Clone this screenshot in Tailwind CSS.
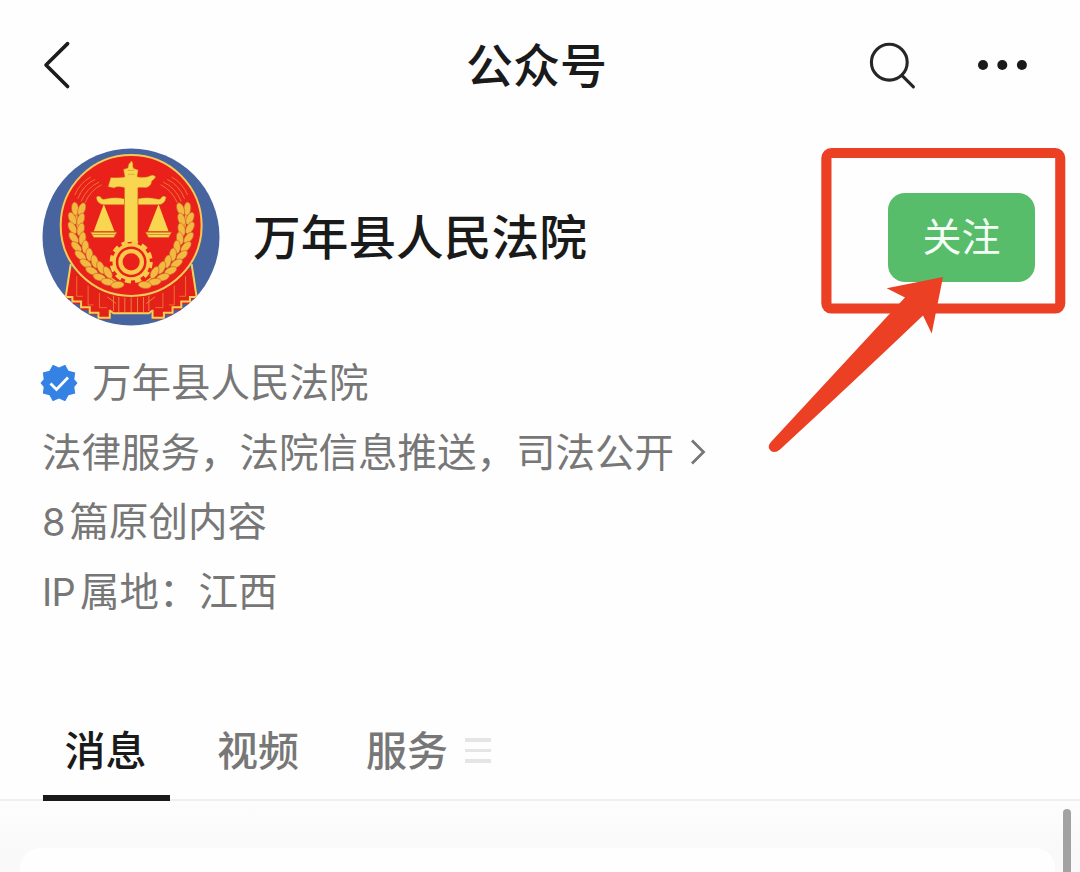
<!DOCTYPE html>
<html lang="zh-CN">
<head>
<meta charset="utf-8">
<title>公众号</title>
<script src="https://cdn.jsdelivr.net/npm/@tailwindcss/browser@4"></script>
</head>
<body class="bg-[#fefefe]">
<div class="relative flex h-[872px] w-[1080px] flex-col overflow-hidden bg-[#fefefe] font-['Noto_Sans_CJK_SC',sans-serif] text-[#1a1a1a]">

  <header class="grid h-[132px] shrink-0 grid-cols-3 items-center pr-[53px] pl-[43px]">
    <svg class="h-[50px] w-[30px]" viewBox="0 0 30 50" fill="none" stroke="#1c1c1c" stroke-width="3.6" stroke-linecap="round" stroke-linejoin="round"><path d="M24.6 2.6 3 24l21.6 21.5"/></svg>
    <h1 class="pb-[6px] pl-[3px] text-center text-[47px] leading-[66px] font-medium">公众号</h1>
    <div class="flex items-center justify-end gap-[61px]">
      <svg class="h-[50px] w-[48px]" viewBox="0 0 48 50" fill="none" stroke="#262626" stroke-width="3.1" stroke-linecap="round"><circle cx="21.3" cy="21.2" r="17.9"/><path d="m34.4 34.8 11 11"/></svg>
      <svg class="-mr-px h-[12px] w-[51px]" viewBox="0 0 51 12" fill="#1a1a1a"><circle cx="6" cy="5" r="5"/><circle cx="25.3" cy="5" r="5"/><circle cx="44.9" cy="5" r="5"/></svg>
    </div>
  </header>

  <section class="flex h-[210px] shrink-0 items-center pr-[45px] pl-[42px]">
    <svg class="h-[178px] w-[178px] shrink-0" viewBox="36 24 533 533">
      <defs>
        <clipPath id="disc"><circle cx="302.5" cy="290.5" r="265"/></clipPath>
        <g id="grain"><ellipse rx="10.5" ry="20" fill="#f3b941" stroke="#cf6030" stroke-width="1.8"/></g>
        <g id="half">
          <path d="M122 385 108 478h20v14h26v18h26v13h26v14h34v-52h68V400z" fill="#e32119"/>
          <path d="M122 372 107 470h20v14h26v17h26v16h26v15h34v-24" fill="none" stroke="#f6cf58" stroke-width="6"/>
          <path d="M140 408v60h18M174 436v58h16M208 458v44h22" fill="none" stroke="#f0973a" stroke-width="2"/>
        </g>
        <g id="side">
          <path d="M134 165q16-38 48-54M143 176q17-42 52-58M153 184q18-42 54-58M165 188q16-38 50-54" fill="none" stroke="#f0913a" stroke-width="2.2"/>
          <path d="M138 205Q140 350 262 428" fill="none" stroke="#f3b63c" stroke-width="7"/>
          <use href="#grain" transform="translate(135 206) rotate(-5)"/>
          <use href="#grain" transform="translate(155 207) rotate(22)"/>
          <use href="#grain" transform="translate(127 235) rotate(-25)"/>
          <use href="#grain" transform="translate(152 238) rotate(20)"/>
          <use href="#grain" transform="translate(127 263) rotate(-30)"/>
          <use href="#grain" transform="translate(152 268) rotate(14)"/>
          <use href="#grain" transform="translate(131 293) rotate(-38)"/>
          <use href="#grain" transform="translate(157 295) rotate(8)"/>
          <use href="#grain" transform="translate(139 320) rotate(-44)"/>
          <use href="#grain" transform="translate(166 320) rotate(0)"/>
          <use href="#grain" transform="translate(151 346) rotate(-50)"/>
          <use href="#grain" transform="translate(178 343) rotate(-6)"/>
          <use href="#grain" transform="translate(167 370) rotate(-57)"/>
          <use href="#grain" transform="translate(194 364) rotate(-14)"/>
          <use href="#grain" transform="translate(185 392) rotate(-64)"/>
          <use href="#grain" transform="translate(212 382) rotate(-22)"/>
          <use href="#grain" transform="translate(208 411) rotate(-72)"/>
          <use href="#grain" transform="translate(233 397) rotate(-30)"/>
          <use href="#grain" transform="translate(233 425) rotate(-80)"/>
          <use href="#grain" transform="translate(262 434) rotate(-96)"/>
        </g>
        <g id="pan"><path d="M221 192 191 273h62z"/><path d="M182 276h78l-9 16h-60z" stroke="#c96b23" stroke-width="2"/><path d="M188 283h66" stroke="#c96b23" stroke-width="2"/></g>
      </defs>
      <g clip-path="url(#disc)">
        <rect x="30" y="20" width="550" height="550" fill="#48649f"/>
        <use href="#half"/>
        <use href="#half" transform="matrix(-1 0 0 1 606 0)"/>
        <path d="M238 462h130v50l-8 8H246l-8-8z" fill="#e32119"/>
        <path d="M250 466v46M266 470v46M284 472v46M303 472v46M322 472v46M340 470v46M356 466v46M232 470l26 20M374 470l-26 20" stroke="#f0913a" stroke-width="2.5"/>
        <path d="M238 510l12 9h106l12-9" fill="none" stroke="#f6cf58" stroke-width="6"/>
        <circle cx="303" cy="256" r="211" fill="#e9211a" stroke="#f4c957" stroke-width="6"/>
        <use href="#side"/>
        <use href="#side" transform="matrix(-1 0 0 1 606 0)"/>
        <g fill="#f9d64f">
          <use href="#pan"/>
          <use href="#pan" transform="matrix(-1 0 0 1 606 0)"/>
          <path d="M198 172q7-8 15 0 2 7 10 5 34-8 60-1v18H224q-22 0-26-22zM408 172q-7-8-15 0-2 7-10 5-34-8-60-1v18h59q22 0 26-22z" stroke="#c9551f" stroke-width="1.5"/>
          <path d="M283 312V143q-22-6-31 1l-18-4 8-28q17 2 42-1l-4-23 13-4 3-13q5-1 6-8 8 1 6 15l2 7 14 5-3 20q24 5 41-4 7-2 9 1 4-1 5 4-3 8-11 12-2 17-19 20-12-2-23 0v169z" stroke="#d5671f" stroke-width="1.5"/>
        </g>
        <path d="M293 103h20M293 91h20" stroke="#d89a2b" stroke-width="2"/>
        <circle cx="303" cy="365" r="60" fill="#e9211a"/>
        <circle cx="303" cy="365" r="58" fill="none" stroke="#f9c94b" stroke-width="13" stroke-dasharray="18 12.37"/>
        <circle cx="303" cy="365" r="51" fill="#e9211a" stroke="#f9c94b" stroke-width="10"/>
        <circle cx="303" cy="365" r="32" fill="none" stroke="#f9c94b" stroke-width="13"/>
      </g>
    </svg>
    <h2 class="ml-[33px] pb-[5px] text-[47.7px] leading-[66px] font-medium">万年县人民法院</h2>
    <button class="ml-auto h-[89px] w-[147px] rounded-[17px] bg-[#57bd6a] pb-[6px] text-[39px] leading-[56px] text-[#f4fff6]">关注</button>
  </section>

  <section class="flex h-[350px] shrink-0 flex-col pt-[6px] pl-[42px] text-[39.5px] leading-[64px] text-[#777]">
    <div class="flex h-[69.6px] items-center gap-[14px]">
      <svg class="-ml-[2px] h-[38px] w-[38px]" viewBox="0 0 38 38"><path d="M19 3.5 25.2.8 28.5 6.8 35.2 8.4 34.3 15.2 37.5 19 34.3 22.9 35.2 29.6 28.5 31.2 25.2 37.2 19 34.5 12.8 37.2 9.5 31.2 2.8 29.6 3.7 22.9.5 19 3.7 15.2 2.8 8.4 9.5 6.8 12.8.8z" fill="#3482e4"/><path d="m10.5 19.5 6 6 11.5-12" fill="none" stroke="#fff" stroke-width="2.8"/></svg>
      <span class="pb-[5px]">万年县人民法院</span>
    </div>
    <div class="flex h-[69.6px] items-center gap-[16px]">
      <span class="pb-[5px]">法律服务，法院信息推送，司法公开</span>
      <svg class="h-[28px] w-[16px]" viewBox="0 0 16 28" fill="none" stroke="#777" stroke-width="2.8"><path d="m2 2.500 11.500 11.500L2 25.500"/></svg>
    </div>
    <div class="flex h-[69.6px] items-baseline gap-[4px]"><span class="font-['Inter',sans-serif] text-[38px]">8</span><span>篇原创内容</span></div>
    <div class="flex h-[69.6px] items-baseline gap-[5px]"><span class="font-['Inter',sans-serif] text-[38px] tracking-[-0.8px]">IP</span><span>属地：江西</span></div>
  </section>

  <nav class="flex h-[109px] shrink-0 border-b-2 border-[#efefef] pl-[43px] text-[41px] leading-[60px] font-medium text-[#777]">
    <div class="-mb-[2px] flex w-[127px] justify-center border-b-6 border-[#1a1a1a] pt-[26px] pr-[2px] text-[#1a1a1a]">消息</div>
    <div class="ml-[47px] pt-[26px]">视频</div>
    <div class="ml-[67px] flex gap-[17px] pt-[26px]">服务
      <div class="mt-[20px] flex flex-col gap-[7px]"><i class="block h-[3.5px] w-[26px] bg-[#e5e5e5]"></i><i class="block h-[3.5px] w-[26px] bg-[#e5e5e5]"></i><i class="block h-[3.5px] w-[26px] bg-[#e5e5e5]"></i></div>
    </div>
  </nav>

  <main class="flex flex-1 bg-linear-to-b from-[#fdfdfd] to-[#f9f9f9] to-70% pt-[47px] pl-[20px]">
    <div class="w-[1035px] rounded-t-[20px] bg-[#fefefe]"></div>
  </main>
  <div class="absolute top-[809px] left-[1063px] h-[80px] w-[8px] rounded-full bg-[#a2a2a2]"></div>

  <!-- Annotation: highlight frame and arrow over the follow button -->
  <svg class="absolute inset-0 h-[872px] w-[1080px]" viewBox="0 0 1080 872" fill="#ec4025">
    <path fill-rule="evenodd" d="M831.300 148H1055.300a10 10 0 0 1 10 10V303.600a10 10 0 0 1-10 10H831.300a10 10 0 0 1-10-10V158a10 10 0 0 1 10-10zM831.500 158V303.400H1055.200V158z"/>
    <path d="M943 277 931.7 333.5 923 315.5Q850 385 780 449.500Q774.500 454 770.500 450.500 767 447 770.500 442.500L889 314.500 905 297.500 886.700 288.300z"/>
  </svg>
</div>
</body>
</html>
